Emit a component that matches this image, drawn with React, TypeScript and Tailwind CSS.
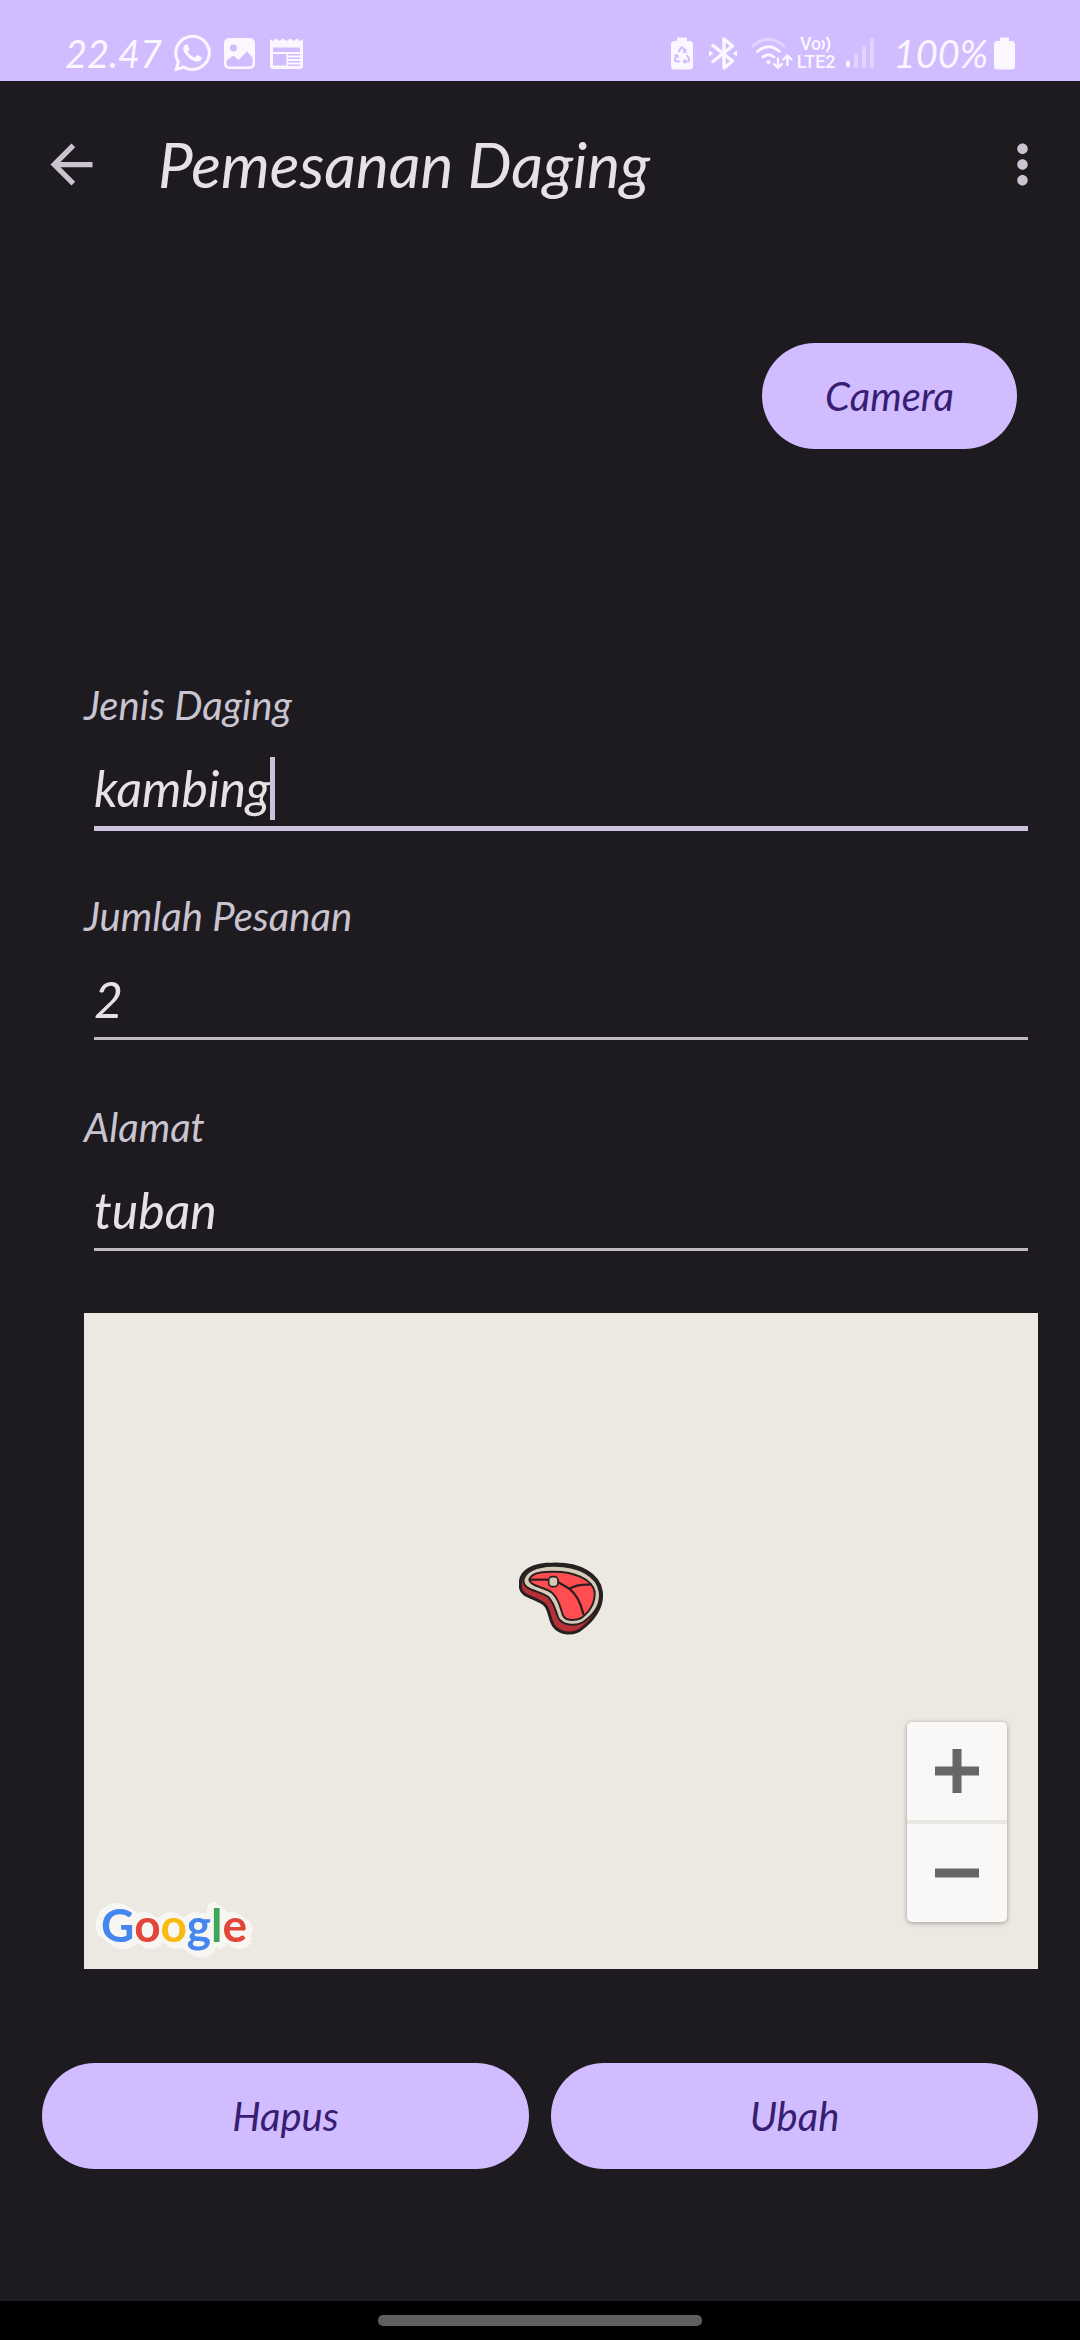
import { useState } from "react";
import { FaWhatsapp } from "react-icons/fa";
import { MdArrowBack, MdMoreVert } from "react-icons/md";

function ImageIcon() {
  return (
    <svg className="h-[31px] w-[31px]" viewBox="0 0 31 31" fill="currentColor" aria-hidden="true">
      <path
        fillRule="evenodd"
        d="M5 0h21a5 5 0 0 1 5 5v21a5 5 0 0 1-5 5H5a5 5 0 0 1-5-5V5a5 5 0 0 1 5-5Zm4.500 6.500a3.500 3.500 0 1 0 0 7 3.500 3.500 0 0 0 0-7ZM2.500 22.500v3a3 3 0 0 0 3 3h20a3 3 0 0 0 3-3v-6l-5.500-6-8.500 8.500-5-4.500Z"
      />
    </svg>
  );
}

function NewsIcon() {
  return (
    <svg className="h-[31px] w-[33px]" viewBox="0 0 33 31" fill="currentColor" aria-hidden="true">
      <path
        fillRule="evenodd"
        d="M0 1l3 2 3-2.500 3.500 2.500L13 .5l3.500 2.500L20 .5l3.500 2.500L27 .5 30 3l3-2v27a3 3 0 0 1-3 3H3a3 3 0 0 1-3-3ZM3 9.500v4.500h27V9.500ZM3 16v11.500h13.500V16ZM18 16v1.500h12V16Zm0 3.500V21h12v-1.500Zm0 3.500v1.500h12V23Zm0 3.500V28h12v-1.500Z"
      />
    </svg>
  );
}

function BatterySaverIcon() {
  return (
    <svg className="h-[33px] w-[22px]" viewBox="0 0 22 33" aria-hidden="true">
      <path fill="currentColor" d="M6 4V1.500Q6 .5 7 .5h8q1 0 1 1V4h2.500Q22 4 22 7.500V29q0 3.500-3.500 3.500h-15Q0 32.500 0 29V7.500Q0 4 3.500 4Z" />
      <g fill="none" stroke="#d0bcff" strokeWidth="2">
        <path d="m7.500 15 2-3.500q1.500-2 3 0l2 3.500M16 18l2 4q.8 2-1.500 2.500H13M9 24.500H5.500Q3.200 24 4 22l2-4" />
        <path strokeWidth="1.600" d="m14.800 12-.2 3.500-3-1M14.500 22.500l-2 2 2 2M3.500 18.800l2.800-.8 1 3" />
      </g>
    </svg>
  );
}

function BluetoothIcon() {
  return (
    <svg className="h-[33px] w-[28px]" viewBox="0 0 28 33" fill="none" stroke="currentColor" strokeWidth="3.400" strokeLinejoin="round" strokeLinecap="round" aria-hidden="true">
      <path d="M4 8.500 23.500 24 15 31V2l8.500 7L4 24.500" />
      <path fill="currentColor" stroke="none" d="m0 13.500 4.500 3L0 19.500ZM28 13.500l-4.500 3 4.500 3Z" />
    </svg>
  );
}

function WifiIcon() {
  return (
    <svg className="h-[33px] w-[42px]" viewBox="0 0 42 33" fill="none" stroke="currentColor" strokeWidth="2.800" strokeLinecap="round" aria-hidden="true">
      <path opacity=".4" d="M2 9Q17.500-4.500 33 9" />
      <path d="M6.500 14.500q11-9.500 22 0" />
      <path d="M12 20q5.500-4.500 11 0" />
      <circle cx="17.500" cy="25" r="2" fill="currentColor" stroke="none" />
      <path strokeWidth="2.400" strokeLinejoin="round" d="M27 21.500v9m-4-3.500 4 4 4-4M36.500 28v-9m-4 3.500 4-4 4 4" />
    </svg>
  );
}

function SignalIcon() {
  return (
    <svg className="h-[30px] w-[28px]" viewBox="0 0 28 30" fill="currentColor" aria-hidden="true">
      <rect y="22.500" width="4" height="7" rx="2" />
      <g opacity=".4">
        <rect x="8" y="15" width="4" height="15" rx="1.500" />
        <rect x="16" y="7" width="4" height="23" rx="1.500" />
        <rect x="24" width="4" height="30" rx="1.500" />
      </g>
    </svg>
  );
}

function BatteryIcon() {
  return (
    <svg className="h-[33px] w-[21px]" viewBox="0 0 21 33" fill="currentColor" aria-hidden="true">
      <path d="M6 4V1.500Q6 .5 7 .5h7q1 0 1 1V4h2.500Q21 4 21 7.500V29q0 3.500-3.500 3.500h-14Q0 32.500 0 29V7.500Q0 4 3.500 4Z" />
    </svg>
  );
}

function VoLte() {
  return (
    <span className="flex w-[41px] flex-col items-center font-['Roboto'] text-[18px] leading-[18px] font-medium">
      <span className="flex items-center">
        Vo
        <svg className="h-[17px] w-[11px]" viewBox="0 0 11 17" fill="none" stroke="currentColor" strokeWidth="2.200" aria-hidden="true">
          <path d="M1 4q4 4.500 0 9M5.500 1q6 7 0 15" />
        </svg>
      </span>
      <span>LTE2</span>
    </span>
  );
}

function StatusBar() {
  return (
    <div className="flex h-[81px] items-end justify-between bg-[#d0bcff] pr-[65px] pb-[6px] pl-[65px] text-[38px] leading-[44px] text-[#fbf7ff] italic">
      <div className="flex items-center">
        <span className="w-[109px]">22.47</span>
        <FaWhatsapp className="h-[42px] w-[37px]" />
        <span className="ml-[13px]"><ImageIcon /></span>
        <span className="ml-[15px]"><NewsIcon /></span>
      </div>
      <div className="flex items-center">
        <BatterySaverIcon />
        <span className="ml-4"><BluetoothIcon /></span>
        <span className="ml-[14px]"><WifiIcon /></span>
        <span className="ml-[3px] not-italic"><VoLte /></span>
        <span className="ml-[9px]"><SignalIcon /></span>
        <span className="mr-[6px] ml-[20px]">100%</span>
        <BatteryIcon />
      </div>
    </div>
  );
}

function SteakMarker() {
  return (
    <svg className="absolute top-1/2 left-1/2 size-[84px] -translate-x-1/2 -translate-y-full" viewBox="57 51 252 252" strokeLinejoin="round" strokeLinecap="round" role="img" aria-label="Lokasi pesanan">
      <path
        d="M61 128C62 92 100 72 160 72C240 70 298 104 304 155C310 200 280 240 245 266C222 286 180 284 160 256C146 232 150 210 134 194C112 172 62 172 61 140Z"
        fill="#b92f38"
        stroke="#262120"
        strokeWidth="9"
      />
      <path
        d="M70 122C74 94 108 78 160 77C235 76 292 108 299 155C304 192 282 224 250 246C226 260 186 256 174 232C164 206 164 192 146 172C122 150 74 156 70 122Z"
        fill="#d5cbb9"
        stroke="#262120"
        strokeWidth="6"
      />
      <path
        d="M88 118C94 100 122 94 160 95C222 94 276 118 284 155C286 190 268 216 244 234C222 244 194 242 188 224C180 200 178 180 158 160C138 140 92 142 88 118Z"
        fill="#ff4d52"
        stroke="#2a2020"
        strokeWidth="6"
      />
      <path d="M93 119H146M174 126L208 146M208 146Q232 132 268 134M208 146Q238 170 250 222" fill="none" stroke="#2d1d20" strokeWidth="7" />
      <rect x="146" y="110" width="28" height="30" rx="11" fill="#d5cbb9" stroke="#2a2020" strokeWidth="5" />
    </svg>
  );
}

function GoogleLogo() {
  return (
    <a
      href="#google"
      aria-label="Google"
      className="absolute bottom-[20px] left-[17px] font-['Lato'] text-[46px] leading-[48px] font-bold not-italic [filter:drop-shadow(4px_3px_0_#f7f6f3)_drop-shadow(-6px_-4px_0_#f7f6f3)_drop-shadow(3px_-2px_0_#f7f6f3)_drop-shadow(-1px_4px_0_#f7f6f3)]"
    >
      <span className="text-[#4587ee]">G</span>
      <span className="text-[#e14638]">o</span>
      <span className="text-[#f7bb12]">o</span>
      <span className="text-[#4587ee]">g</span>
      <span className="text-[#3ea55a]">l</span>
      <span className="text-[#e14638]">e</span>
    </a>
  );
}

function MapView() {
  return (
    <section aria-label="Peta" className="relative mt-[60px] h-[656px] bg-[#ebe9e1]">
      <SteakMarker />
      <GoogleLogo />
      <div className="absolute right-[31px] bottom-[47px] flex h-[200px] w-[100px] flex-col overflow-hidden rounded-[5px] bg-[#f9f8f6] shadow-[0_1px_5px_rgba(0,0,0,0.35)]">
        <button type="button" aria-label="Perbesar" className="flex flex-1 items-center justify-center border-b-2 border-[#e8e7e4]">
          <svg className="size-11" viewBox="0 0 44 44" fill="#666" aria-hidden="true">
            <path d="M17.500 0h9v17.500H44v9H26.500V44h-9V26.500H0v-9h17.500Z" />
          </svg>
        </button>
        <button type="button" aria-label="Perkecil" className="flex flex-1 items-center justify-center border-t-2 border-[#e8e7e4]">
          <svg className="size-11" viewBox="0 0 44 44" fill="#666" aria-hidden="true">
            <path d="M0 17.500h44v9H0Z" />
          </svg>
        </button>
      </div>
    </section>
  );
}

type FieldProps = { id: string; label: string; initial: string; active?: boolean };

function Field({ id, label, initial, active = false }: FieldProps) {
  const [value, setValue] = useState(initial);
  return (
    <div>
      <label htmlFor={id} className="block text-[40px] leading-[48px] text-[#cac4d0]">
        {label}
      </label>
      <div className="mt-[27px] mr-[10px] ml-[10px]">
        <div className="flex h-16 items-center">
          <input
            id={id}
            value={value}
            onChange={(e) => setValue(e.target.value)}
            className={
              active
                ? "field-sizing-content min-w-0 bg-transparent text-[50px] leading-[64px] text-[#e6e1e5] italic outline-none"
                : "w-full bg-transparent text-[50px] leading-[64px] text-[#e6e1e5] italic outline-none"
            }
          />
          {active && <span className="h-[63px] w-[5px] bg-[#ccc2dc]" />}
        </div>
        <div className="mt-[6px] h-[5px]">
          <div className={active ? "h-[5px] bg-[#ccc2dc]" : "h-[3px] bg-[#bfbac4]"} />
        </div>
      </div>
    </div>
  );
}

const pill = "h-[106px] rounded-full bg-[#d0bcff] text-[40px] leading-[48px] text-[#381e72] italic";

export default function App() {
  return (
    <div className="flex min-h-screen flex-col bg-[#1d1b20] font-['Lato',sans-serif] italic">
      <StatusBar />
      <header className="flex h-[166px] items-center pr-[26px] pl-10">
        <button type="button" aria-label="Kembali" className="text-[63px] text-[#cac4d0]">
          <MdArrowBack />
        </button>
        <h1 className="ml-[55px] flex-1 text-[62px] leading-[72px] text-[#e6e1e5]">Pemesanan Daging</h1>
        <button type="button" aria-label="Opsi lainnya" className="text-[63px] text-[#cac4d0]">
          <MdMoreVert />
        </button>
      </header>
      <main className="flex flex-col pr-[42px] pl-[42px]">
        <button type="button" className={`${pill} mt-24 mr-[21px] min-w-[255px] self-end`}>
          Camera
        </button>
        <form className="mt-[232px] ml-[42px] flex flex-col gap-[61px]" onSubmit={(e) => e.preventDefault()}>
          <Field id="jenis" label="Jenis Daging" initial="kambing" active />
          <Field id="jumlah" label="Jumlah Pesanan" initial="2" />
          <Field id="alamat" label="Alamat" initial="tuban" />
        </form>
        <div className="ml-[42px]">
          <MapView />
        </div>
        <div className="mt-[94px] grid grid-cols-2 gap-[22px]">
          <button type="button" className={pill}>Hapus</button>
          <button type="button" className={pill}>Ubah</button>
        </div>
      </main>
      <footer className="mt-auto flex h-[39px] items-start justify-center bg-black pt-[14px]">
        <div className="h-[11px] w-[30%] rounded-[5px] bg-[#5f5f5f]" />
      </footer>
    </div>
  );
}
